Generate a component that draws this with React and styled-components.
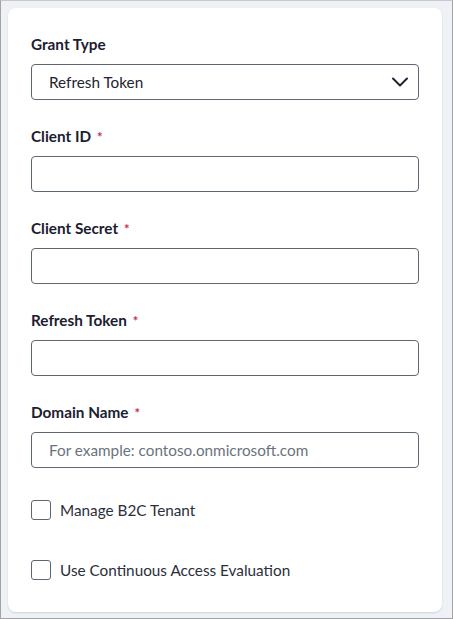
import React from 'react'
import styled, { createGlobalStyle } from 'styled-components'

const Global = createGlobalStyle`
  html, body {
    margin: 0;
    padding: 0;
    background: #f1f3f6;
  }
  body {
    font-family: Lato, "Open Sans", sans-serif;
    color: #1e2330;
  }
`

const Frame = styled.div`
  box-sizing: border-box;
  width: 453px;
  height: 619px;
  border: 1px solid #a3a3a3;
  border-top-color: #c8c8c8;
  padding: 7px 10px 0 7px;
  background: #eef1f5;
`

const Card = styled.div`
  box-sizing: border-box;
  height: 604px;
  background: #fff;
  border-radius: 8px;
  box-shadow: 0 1px 2px rgba(0, 0, 0, 0.12);
  padding: 26px 23px 0 23px;
`

const Field = styled.div`
  margin-bottom: 26px;
`

const Label = styled.div`
  font-size: 15.3px;
  font-weight: 700;
  line-height: 20px;
  height: 20px;
  margin-bottom: 10px;
  color: #1b2030;
`

const Star = styled.span`
  color: #c4314b;
  font-size: 13px;
  margin-left: 6px;
`

const Box = styled.div`
  box-sizing: border-box;
  height: 36px;
  border: 1px solid #5d6772;
  border-radius: 4px;
  display: flex;
  align-items: center;
  justify-content: space-between;
  padding: 0 9px 0 17px;
  font-size: 15.3px;
  color: ${p => (p.placeholder ? '#6b737d' : '#1e2330')};
`

const Check = styled.div`
  display: flex;
  align-items: center;
  gap: 9px;
  font-size: 15.3px;
  height: 20px;
  margin-top: ${p => p.top}px;
  color: #2a2f3a;
`

const Square = styled.span`
  box-sizing: border-box;
  width: 20px;
  height: 20px;
  border: 1px solid #5d6772;
  border-radius: 3px;
`

const Chevron = () => (
  <svg width="18" height="18" viewBox="0 0 18 18">
    <path d="M2 5.5 L9 12.5 L16 5.5" fill="none" stroke="#1e2330" strokeWidth="2" strokeLinecap="round" strokeLinejoin="round" />
  </svg>
)

const fields = ['Client ID', 'Client Secret', 'Refresh Token']

export default function App() {
  return (
    <Frame>
      <Global />
      <Card>
        <Field>
          <Label>Grant Type</Label>
          <Box>
            <span>Refresh Token</span>
            <Chevron />
          </Box>
        </Field>
        {fields.map(f => (
          <Field key={f}>
            <Label>
              {f}
              <Star>*</Star>
            </Label>
            <Box />
          </Field>
        ))}
        <Field>
          <Label>
            Domain Name
            <Star>*</Star>
          </Label>
          <Box placeholder="1">For example: contoso.onmicrosoft.com</Box>
        </Field>
        <Check top={32}>
          <Square />
          Manage B2C Tenant
        </Check>
        <Check top={40}>
          <Square />
          Use Continuous Access Evaluation
        </Check>
      </Card>
    </Frame>
  )
}
